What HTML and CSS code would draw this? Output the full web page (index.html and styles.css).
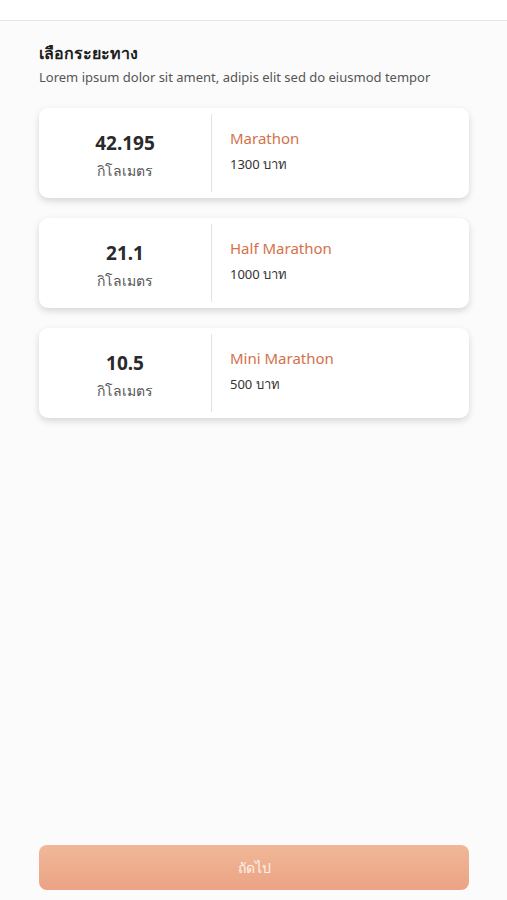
FILE: index.html
```html
<!DOCTYPE html>
<html lang="th">
<head>
<meta charset="utf-8">
<link rel="stylesheet" href="styles.css">
</head>
<body>
<div class="page">
  <header class="topbar"></header>
  <main class="content">
    <h1 class="title">เลือกระยะทาง</h1>
    <p class="subtitle">Lorem ipsum dolor sit ament, adipis elit sed do eiusmod tempor</p>
    <div class="list">
      <div class="card">
        <div class="dist"><span class="num">42.195</span><span class="unit">กิโลเมตร</span></div>
        <div class="info"><span class="name">Marathon</span><span class="price">1300 บาท</span></div>
      </div>
      <div class="card">
        <div class="dist"><span class="num">21.1</span><span class="unit">กิโลเมตร</span></div>
        <div class="info"><span class="name">Half Marathon</span><span class="price">1000 บาท</span></div>
      </div>
      <div class="card">
        <div class="dist"><span class="num">10.5</span><span class="unit">กิโลเมตร</span></div>
        <div class="info"><span class="name">Mini Marathon</span><span class="price">500 บาท</span></div>
      </div>
    </div>
  </main>
  <footer class="footer">
    <button class="next">ถัดไป</button>
  </footer>
</div>
</body>
</html>
```
FILE: styles.css
```css
* { box-sizing: border-box; }
html, body { margin: 0; padding: 0; }
body {
  font-family: "Noto Sans", "Open Sans", sans-serif;
  background: #fbfbfb;
  color: #222;
}
.page {
  height: 900px;
  display: flex;
  flex-direction: column;
}
.topbar {
  height: 21px;
  background: #fff;
  border-bottom: 1px solid #e4e4e4;
}
.content {
  flex: 1;
  padding: 20px 38px 0 39px;
}
.title {
  margin: 0;
  font-size: 16px;
  font-weight: 700;
  line-height: 24px;
  color: #1d1d1d;
}
.subtitle {
  margin: 2px 0 0;
  font-size: 13px;
  line-height: 20px;
  color: #555;
}
.list {
  margin-top: 21px;
  display: flex;
  flex-direction: column;
  gap: 20px;
}
.card {
  height: 90px;
  background: #fff;
  border-radius: 9px;
  box-shadow: 0 3px 7px rgba(0,0,0,0.15);
  display: flex;
  align-items: stretch;
  padding: 6px 0;
}
.dist {
  width: 173px;
  border-right: 1px solid #e2e2e2;
  display: flex;
  flex-direction: column;
  align-items: center;
  justify-content: center;
  gap: 6px;
  padding-top: 6px;
}
.num {
  font-size: 19px;
  font-weight: 700;
  line-height: 24px;
  color: #2a2a2a;
}
.unit {
  font-size: 14px;
  line-height: 20px;
  color: #555;
}
.info {
  padding: 14px 0 0 18px;
  display: flex;
  flex-direction: column;
  gap: 6px;
}
.name {
  font-size: 15px;
  line-height: 20px;
  color: #d4714a;
}
.price {
  font-size: 13px;
  line-height: 20px;
  color: #333;
}
.footer {
  padding: 0 38px 10px 39px;
}
.next {
  width: 100%;
  height: 45px;
  border: none;
  border-radius: 8px;
  background: linear-gradient(#f0b898, #eba384);
  color: #fdf1ea;
  font-family: inherit;
  font-size: 14px;
}
```
